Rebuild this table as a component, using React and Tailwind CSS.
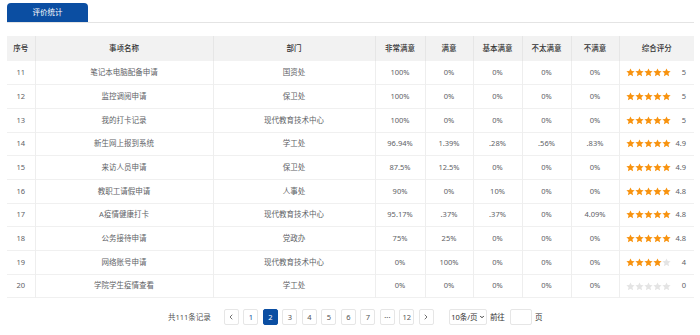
import { ChevronLeft, ChevronRight, ChevronDown } from 'lucide-react';

const rows = [
  { id: 11, name: '笔记本电脑配备申请', dept: '国资处', v: ['100%', '0%', '0%', '0%', '0%'], stars: 5, score: '5' },
  { id: 12, name: '监控调阅申请', dept: '保卫处', v: ['100%', '0%', '0%', '0%', '0%'], stars: 5, score: '5' },
  { id: 13, name: '我的打卡记录', dept: '现代教育技术中心', v: ['100%', '0%', '0%', '0%', '0%'], stars: 5, score: '5' },
  { id: 14, name: '新生网上报到系统', dept: '学工处', v: ['96.94%', '1.39%', '.28%', '.56%', '.83%'], stars: 5, score: '4.9' },
  { id: 15, name: '来访人员申请', dept: '保卫处', v: ['87.5%', '12.5%', '0%', '0%', '0%'], stars: 5, score: '4.9' },
  { id: 16, name: '教职工请假申请', dept: '人事处', v: ['90%', '0%', '10%', '0%', '0%'], stars: 5, score: '4.8' },
  { id: 17, name: 'A疫情健康打卡', dept: '现代教育技术中心', v: ['95.17%', '.37%', '.37%', '0%', '4.09%'], stars: 5, score: '4.8' },
  { id: 18, name: '公务接待申请', dept: '党政办', v: ['75%', '25%', '0%', '0%', '0%'], stars: 5, score: '4.8' },
  { id: 19, name: '网络账号申请', dept: '现代教育技术中心', v: ['0%', '100%', '0%', '0%', '0%'], stars: 4, score: '4' },
  { id: 20, name: '学院学生疫情查看', dept: '学工处', v: ['0%', '0%', '0%', '0%', '0%'], stars: 0, score: '0' },
];

const headers = ['序号', '事项名称', '部门', '非常满意', '满意', '基本满意', '不太满意', '不满意', '综合评分'];

function Star({ on }) {
  return (
    <svg viewBox="0 0 24 24" className="w-[9px] h-[9px]">
      <path
        d="M12 1l3.3 7 7.7.8-5.8 5.2 1.7 7.7L12 17.8l-6.9 3.9 1.7-7.7L1 8.8l7.7-.8z"
        fill={on ? '#f8930f' : '#e4e4e4'}
      />
    </svg>
  );
}

function PageBtn({ children, active }) {
  return (
    <div
      className={`w-[15px] h-[16px] flex items-center justify-center border rounded-[2px] text-[7.5px] ${
        active ? 'bg-[#0b4ea2] border-[#0b4ea2] text-white' : 'bg-white border-[#e6e6e6] text-[#555]'
      }`}
    >
      {children}
    </div>
  );
}

export default function App() {
  return (
    <div
      className="w-[700px] h-[335px] bg-white overflow-hidden pl-[7px] pr-[6px] text-[#606266]"
      style={{ fontFamily: '"Noto Sans", "Noto Sans CJK SC", sans-serif' }}
    >
      {/* tabs */}
      <div className="pt-[3px] border-b border-[#e4e4e4]">
        <div className="w-[81px] h-[19px] bg-[#0b4ea2] rounded-t-[4px] flex items-center justify-center text-white text-[7.5px]">
          评价统计
        </div>
      </div>

      {/* table */}
      <table className="mt-[13px] w-[687px] table-fixed border-collapse text-[7.5px]">
        <colgroup>
          <col className="w-[28px]" />
          <col className="w-[178px]" />
          <col className="w-[162px]" />
          <col className="w-[50px]" />
          <col className="w-[48px]" />
          <col className="w-[49px]" />
          <col className="w-[49px]" />
          <col className="w-[48px]" />
          <col />
        </colgroup>
        <thead>
          <tr className="bg-[#f2f2f2] h-[25px]">
            {headers.map((h, i) => (
              <th
                key={h}
                className={`font-medium text-[#333] p-0 ${i > 0 ? 'border-l border-[#e6e6e6]' : ''}`}
              >
                {h}
              </th>
            ))}
          </tr>
        </thead>
        <tbody>
          {rows.map((r) => (
            <tr key={r.id} className="h-[23.7px] border-b border-[#f0f0f0]">
              <td className="text-center p-0">{r.id}</td>
              <td className="text-center p-0 border-l border-[#eeeeee]">{r.name}</td>
              <td className="text-center p-0 border-l border-[#eeeeee]">{r.dept}</td>
              {r.v.map((x, i) => (
                <td key={i} className="text-center p-0 border-l border-[#eeeeee]">
                  {x}
                </td>
              ))}
              <td className="p-0 border-l border-[#eeeeee]">
                <div className="flex items-center pl-[6px] pr-[8px]">
                  <div className="flex">
                    {[0, 1, 2, 3, 4].map((s) => (
                      <Star key={s} on={s < r.stars} />
                    ))}
                  </div>
                  <span className="ml-auto">{r.score}</span>
                </div>
              </td>
            </tr>
          ))}
        </tbody>
      </table>

      {/* pagination */}
      <div className="mt-[11px] flex items-center text-[7.5px] text-[#555]">
        <span className="ml-[161px]">共111条记录</span>
        <div className="ml-[13px] flex gap-[4.5px]">
          <PageBtn>
            <ChevronLeft className="w-[8px] h-[8px]" strokeWidth={2.5} />
          </PageBtn>
          <PageBtn><span className="text-[#0b4ea2]">1</span></PageBtn>
          <PageBtn active>2</PageBtn>
          <PageBtn>3</PageBtn>
          <PageBtn>4</PageBtn>
          <PageBtn>5</PageBtn>
          <PageBtn>6</PageBtn>
          <PageBtn>7</PageBtn>
          <PageBtn>···</PageBtn>
          <PageBtn>12</PageBtn>
          <PageBtn>
            <ChevronRight className="w-[8px] h-[8px]" strokeWidth={2.5} />
          </PageBtn>
        </div>
        <div className="ml-[15px] w-[38px] h-[16px] border border-[#e6e6e6] rounded-[2px] flex items-center justify-center gap-[1px] text-[#333]">
          10条/页
          <ChevronDown className="w-[6px] h-[6px]" strokeWidth={4} />
        </div>
        <span className="ml-[3px] text-[#333]">前往</span>
        <div className="ml-[5px] w-[22px] h-[16px] border border-[#e6e6e6] rounded-[2px]" />
        <span className="ml-[3px] text-[#333]">页</span>
      </div>
    </div>
  );
}
